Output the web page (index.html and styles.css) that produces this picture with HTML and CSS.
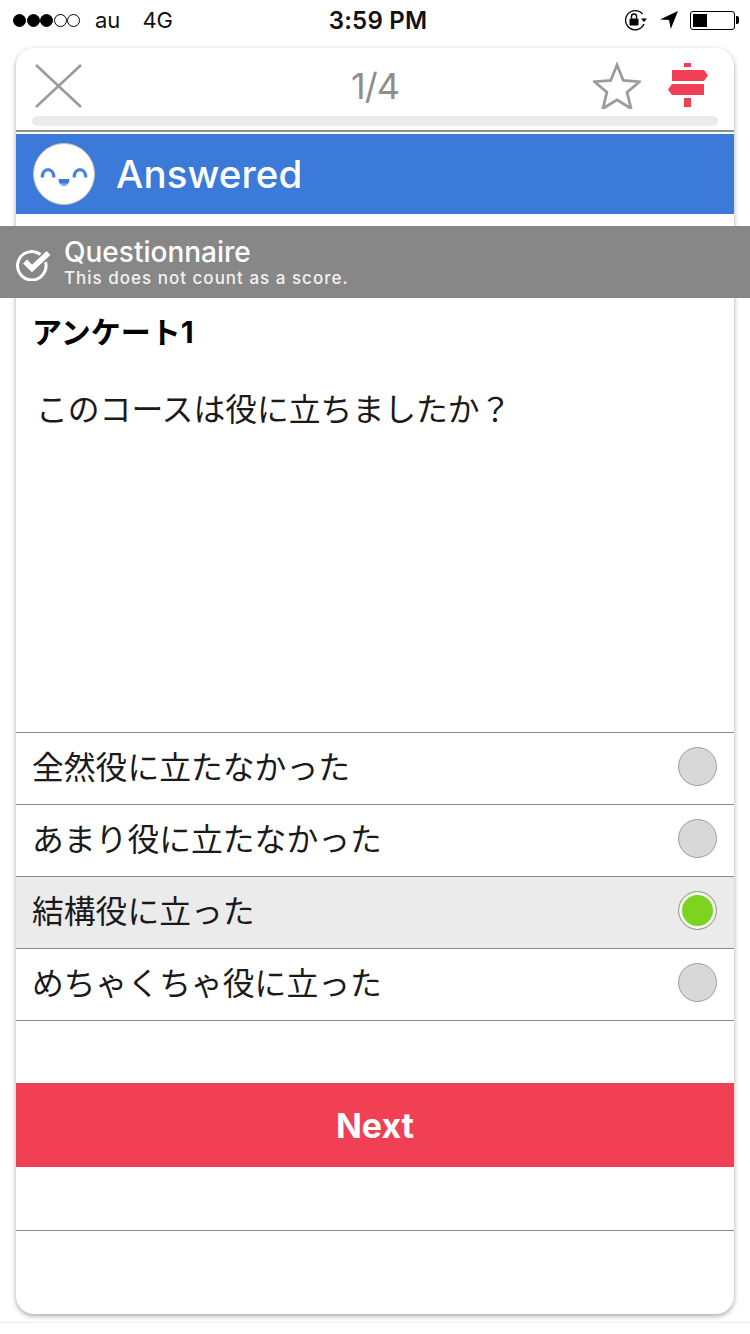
FILE: index.html
```
<!DOCTYPE html>
<html lang="ja">
<head>
<meta charset="utf-8">
<title>Questionnaire</title>
<link rel="stylesheet" href="styles.css">
</head>
<body>
<div class="status">
  <div class="status-left">
    <span class="dots"><i class="dot on"></i><i class="dot on"></i><i class="dot on"></i><i class="dot"></i><i class="dot"></i></span>
    <span class="carrier">au</span>
    <span class="net">4G</span>
  </div>
  <div class="clock">3:59 PM</div>
  <div class="status-right">
    <svg class="ic-lock" width="24" height="22" viewBox="0 0 24 22"><path d="M18.500 5A9.600 9.600 0 1 0 20 15" fill="none" stroke="#000" stroke-width="1.300"/><path d="M17 9.500h6l-3 3.500z" fill="#000"/><rect x="5.500" y="9.500" width="9" height="7" rx="1" fill="#000"/><path d="M7.500 9.500V7.500a2.500 2.500 0 0 1 5 0v2" fill="none" stroke="#000" stroke-width="1.400"/></svg>
    <svg class="ic-loc" width="18" height="18" viewBox="0 0 18 18"><path d="M18 0L0 8.500l9 .6L10.800 18z" fill="#000"/></svg>
    <div class="battery"><div class="battery-body"><div class="battery-fill"></div></div><div class="battery-tip"></div></div>
  </div>
</div>

<main class="card">
  <header class="top">
    <div class="top-row">
      <svg class="ic-close" width="47" height="44" viewBox="0 0 47 44"><path d="M1 1l45 42M46 1L1 43" stroke="#9b9b9b" stroke-width="2.600" fill="none"/></svg>
      <div class="count">1/4</div>
      <div class="top-icons">
        <svg class="ic-star" width="48" height="48" viewBox="0 0 48 48"><path d="M24 4l6.300 15.500 16.200 1.200-12.400 10.600 3.900 16.200L24 38.800 10 47.500l3.900-16.200L1.500 20.700l16.200-1.200z" fill="none" stroke="#9b9b9b" stroke-width="2.800"/></svg>
        <svg class="ic-sign" width="40" height="44" viewBox="0 0 40 44"><path d="M16 0h7v4h-7zM4 7h32l4 5.500-4 5.500H4zM36 21H4l-4 5.500L4 32h32zM16 35h7v9h-7z" fill="#f13f54"/></svg>
      </div>
    </div>
    <div class="progress"></div>
  </header>

  <div class="answered">
    <svg class="face" width="62" height="62" viewBox="0 0 62 62"><circle cx="31" cy="31" r="30.500" fill="#fff" stroke="#c9c3b8" stroke-width="1"/><path d="M9.300 34.500c0-10.500 11.500-10.500 11.500 0M41.200 34.500c0-10.500 11.500-10.500 11.500 0" fill="none" stroke="#4a86e0" stroke-width="3.400"/><path d="M25.500 36h11a5.500 7 0 0 1-11 0z" fill="#3c7ada"/><path d="M27.200 40.500h7.600a5.500 7 0 0 1-7.600 0z" fill="#8fb8ee"/></svg>
    <span class="answered-text">Answered</span>
  </div>

  <div class="notice">
    <svg class="ic-check" width="36" height="34" viewBox="0 0 36 34"><path d="M25.500 7.500A14.200 14.200 0 1 0 30.500 15" fill="none" stroke="#fff" stroke-width="3"/><path d="M10 14.500l7 7L33.500 6" fill="none" stroke="#fff" stroke-width="5.500"/></svg>
    <div class="notice-text">
      <div class="notice-title">Questionnaire</div>
      <div class="notice-sub">This does not count as a score.</div>
    </div>
  </div>

  <section class="question">
    <h1 class="q-title">アンケート1</h1>
    <p class="q-text">このコースは役に立ちましたか？</p>
  </section>

  <ul class="options">
    <li class="option"><span>全然役に立たなかった</span><i class="radio"></i></li>
    <li class="option"><span>あまり役に立たなかった</span><i class="radio"></i></li>
    <li class="option selected"><span>結構役に立った</span><i class="radio checked"></i></li>
    <li class="option"><span>めちゃくちゃ役に立った</span><i class="radio"></i></li>
  </ul>

  <button class="next">Next</button>
  <div class="foot"></div>
</main>
<div class="page-end"></div>
</body>
</html>
```

FILE: styles.css
```
* { box-sizing: border-box; }
html, body { margin: 0; padding: 0; }
body {
  width: 750px;
  height: 1334px;
  overflow: hidden;
  background: #fff;
  font-family: Inter, "Noto Sans CJK JP", sans-serif;
  color: #000;
}
.status {
  height: 48px;
  padding: 0 11px 8px 13px;
  display: grid;
  grid-template-columns: 1fr auto 1fr;
  align-items: center;
  font-size: 22px;
  color: #111;
}
.status-left { display: flex; align-items: center; }
.dots { display: flex; gap: .5px; margin-right: 15px; }
.dot {
  width: 13px;
  height: 13px;
  border-radius: 50%;
  border: 1px solid #000;
}
.dot.on { background: #000; }
.carrier { margin-right: 22px; }
.clock { font-weight: 600; font-size: 24px; letter-spacing: .2px; margin-left: 4px; }
.status-right { display: flex; align-items: center; justify-content: flex-end; gap: 12px; }
.battery { display: flex; align-items: center; gap: 1px; }
.battery-body {
  width: 45px;
  height: 19px;
  border: 1px solid #000;
  border-radius: 3px;
  padding: 2px;
}
.battery-fill { width: 14px; height: 100%; background: #000; }
.battery-tip { width: 3px; height: 8px; background: #000; border-radius: 0 2px 2px 0; }

.card {
  width: 718px;
  height: 1266px;
  margin: 0 16px;
  border-radius: 18px;
  background: #fff;
  box-shadow: 0 2px 5px rgba(0, 0, 0, .35);
  display: flex;
  flex-direction: column;
}
.top {
  height: 84px;
  flex: none;
  border-bottom: 2px solid #8a8f99;
  padding: 13px 16px 0;
}
.top-row {
  display: grid;
  grid-template-columns: 1fr auto 1fr;
  align-items: center;
  height: 48px;
  padding-left: 3px;
}
.count { font-size: 36px; color: #8e8e8e; letter-spacing: -1px; margin-right: 3px; }
.top-icons { display: flex; justify-content: flex-end; align-items: center; gap: 27px; padding: 0 10px 2px 0; }
.ic-close { display: block; }
.ic-star { display: block; }
.ic-sign { display: block; }
.progress {
  height: 10px;
  margin-top: 7px;
  background: #ebebeb;
  border-radius: 5px;
}
.answered {
  margin-top: 2px;
  height: 80px;
  flex: none;
  background: #3c7ada;
  display: flex;
  align-items: center;
  padding-left: 17px;
  gap: 21px;
  color: #fff;
}
.answered-text { font-size: 38.500px; font-weight: 500; letter-spacing: .1px; }
.notice {
  margin: 12px -16px 0;
  height: 72px;
  flex: none;
  background: #878787;
  color: #fff;
  display: flex;
  align-items: center;
  padding-left: 15px;
  gap: 13px;
}
.ic-check { flex: none; margin-top: 3px; }
.notice-title { font-size: 28px; font-weight: 500; line-height: 30px; }
.notice-sub { font-size: 17px; font-weight: 500; line-height: 20px; letter-spacing: 1px; color: #f2f2f2; margin-top: 1px; }
.question { height: 434px; flex: none; padding: 14px 16px 0; }
.q-title { margin: 0; font-size: 30px; font-weight: 700; line-height: 40px; }
.q-text { margin: 35px 0 0 4px; font-size: 31.800px; line-height: 46px; color: #1a1a1a; }
.options { margin: 0; padding: 0; list-style: none; border-top: 1px solid #8a8a8a; flex: none; }
.option {
  height: 72px;
  border-bottom: 1px solid #8a8a8a;
  display: flex;
  align-items: center;
  justify-content: space-between;
  padding: 0 17px 5px 16px;
  font-size: 31.800px;
  color: #1a1a1a;
}
.option span { margin-bottom: 2px; }
.option.selected { background: #ebebeb; }
.radio {
  width: 39px;
  height: 39px;
  border-radius: 50%;
  border: 1.500px solid #9e9e9e;
  background: #d8d8d8;
  flex: none;
}
.radio.checked {
  background: #7ed321;
  box-shadow: inset 0 0 0 3px #f5f5f5;
}
.next {
  margin-top: 62px;
  height: 84px;
  flex: none;
  border: 0;
  background: #f13f54;
  color: #fff;
  font-family: inherit;
  font-size: 34px;
  font-weight: 700;
}
.foot { height: 64px; flex: none; border-bottom: 1px solid #8a8a8a; }
.page-end { margin-top: 8px; border-top: 1px solid #eee; }
```
